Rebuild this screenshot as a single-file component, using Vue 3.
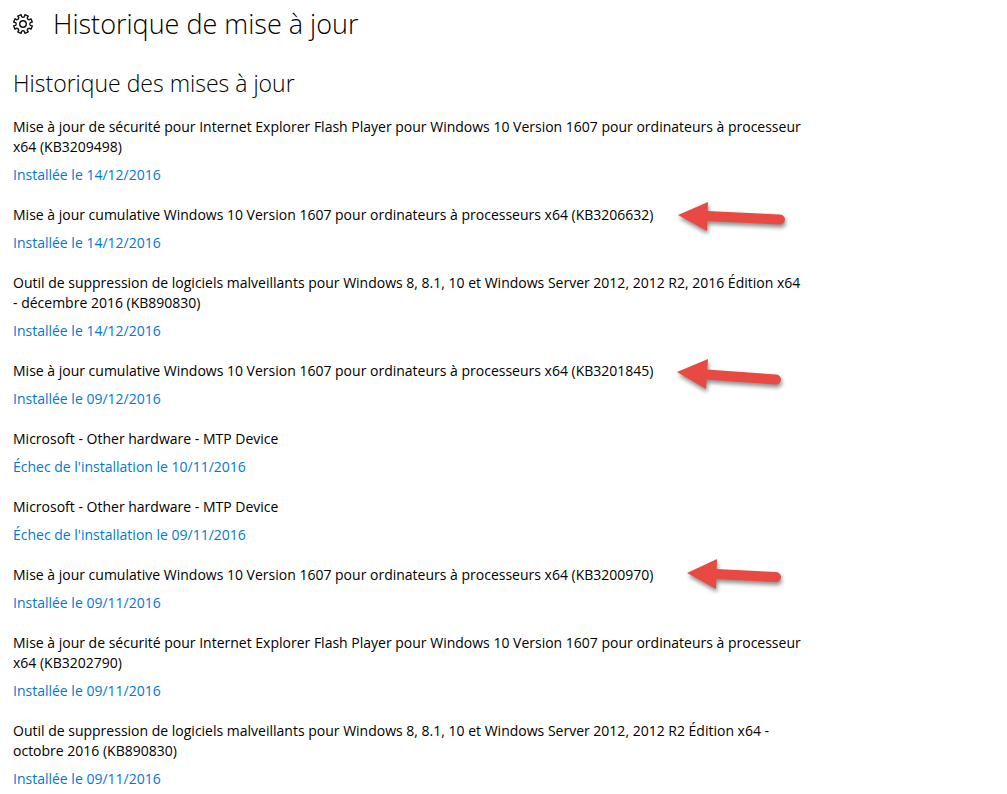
<script setup>
const updates = [
  {
    title: 'Mise à jour de sécurité pour Internet Explorer Flash Player pour Windows 10 Version 1607 pour ordinateurs à processeur\nx64 (KB3209498)',
    status: 'Installée le 14/12/2016',
  },
  {
    title: 'Mise à jour cumulative Windows 10 Version 1607 pour ordinateurs à processeurs x64 (KB3206632)',
    status: 'Installée le 14/12/2016',
    arrow: { head: '13,20 43,7 42,36', shaft: 'M42 21 L115 24.5' },
  },
  {
    title: 'Outil de suppression de logiciels malveillants pour Windows 8, 8.1, 10 et Windows Server 2012, 2012 R2, 2016 Édition x64\n- décembre 2016 (KB890830)',
    status: 'Installée le 14/12/2016',
  },
  {
    title: 'Mise à jour cumulative Windows 10 Version 1607 pour ordinateurs à processeurs x64 (KB3201845)',
    status: 'Installée le 09/12/2016',
    arrow: { head: '12,21 43,8 41,38', shaft: 'M41 23.5 L111 28.5' },
  },
  {
    title: 'Microsoft - Other hardware - MTP Device',
    status: "Échec de l'installation le 10/11/2016",
  },
  {
    title: 'Microsoft - Other hardware - MTP Device',
    status: "Échec de l'installation le 09/11/2016",
  },
  {
    title: 'Mise à jour cumulative Windows 10 Version 1607 pour ordinateurs à processeurs x64 (KB3200970)',
    status: 'Installée le 09/11/2016',
    arrow: { head: '22,18 52,4 51,34', shaft: 'M51 19 L111 22' },
  },
  {
    title: 'Mise à jour de sécurité pour Internet Explorer Flash Player pour Windows 10 Version 1607 pour ordinateurs à processeur\nx64 (KB3202790)',
    status: 'Installée le 09/11/2016',
  },
  {
    title: 'Outil de suppression de logiciels malveillants pour Windows 8, 8.1, 10 et Windows Server 2012, 2012 R2 Édition x64 -\noctobre 2016 (KB890830)',
    status: 'Installée le 09/11/2016',
  },
]

// Outline of an eight-toothed gear centred on 0,0
const teeth = 8
const point = (radius, degrees) => {
  const a = (degrees * Math.PI) / 180
  return `${(radius * Math.cos(a)).toFixed(2)} ${(radius * Math.sin(a)).toFixed(2)}`
}
let gear = ''
for (let i = 0; i < teeth; i++) {
  const c = (i * 360) / teeth + 22.5
  gear += `${i ? 'L' : 'M'}${point(7.4, c - 12)} L${point(9.5, c - 11)} L${point(9.5, c + 11)} L${point(7.4, c + 12)} Q${point(6.2, c + 22.5)} ${point(7.4, c + 33)} `
}
gear += 'Z'
</script>

<template>
  <main class="page">
    <header class="header">
      <svg class="gear" viewBox="-10 -10 20 20" aria-hidden="true">
        <path :d="gear" />
        <circle r="3.3" />
      </svg>
      <h1>Historique de mise à jour</h1>
    </header>
    <h2>Historique des mises à jour</h2>
    <ul class="list">
      <li v-for="(item, i) in updates" :key="i" class="item">
        <p class="title">{{ item.title }}</p>
        <a class="status" href="#">{{ item.status }}</a>
        <svg v-if="item.arrow" class="arrow" viewBox="0 0 130 50" aria-hidden="true">
          <polygon :points="item.arrow.head" />
          <path :d="item.arrow.shaft" />
        </svg>
      </li>
    </ul>
  </main>
</template>

<style>
body {
  margin: 0;
  background: #fff;
}
</style>

<style scoped>
.page {
  padding: 4px 13px;
  color: #000;
  font-family: "Segoe UI", "Open Sans", "Noto Sans", sans-serif;
  font-size: 14px;
  line-height: 20px;
}
.header {
  display: flex;
  align-items: center;
  gap: 20px;
}
.gear {
  flex: none;
  width: 20px;
  height: 20px;
  overflow: visible;
  fill: none;
  stroke: #111;
  stroke-width: 1.4;
  stroke-linejoin: round;
}
h1,
h2 {
  margin: 0;
  font-weight: 300;
}
h1 {
  font-size: 27px;
  line-height: 40px;
}
h2 {
  margin-top: 23px;
  font-size: 23px;
  line-height: 32px;
}
.list {
  display: flex;
  flex-direction: column;
  gap: 20px;
  margin: 18px 0 0;
  padding: 0;
  list-style: none;
}
.item {
  position: relative;
  display: flex;
  flex-direction: column;
  align-items: flex-start;
  gap: 8px;
}
.title {
  margin: 0;
  white-space: pre-line;
}
.status {
  color: #0078d7;
  text-decoration: none;
}
.arrow {
  position: absolute;
  top: -10px;
  left: 652px;
  width: 130px;
  height: 50px;
  overflow: visible;
  fill: #e84a43;
  filter: drop-shadow(1px 3px 2px rgba(0, 0, 0, 0.45));
}
.arrow path {
  stroke: #e84a43;
  stroke-width: 10;
  stroke-linecap: round;
}
</style>
